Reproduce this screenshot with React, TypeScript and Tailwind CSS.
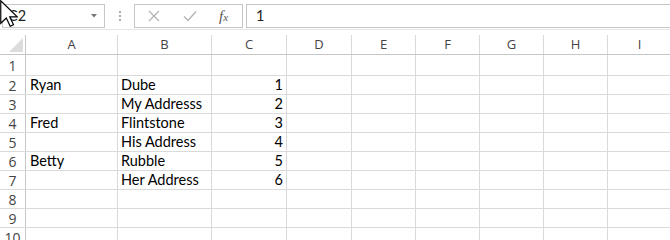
import React from 'react';

const cols = [
  { name: 'A', w: 'w-[92px]' },
  { name: 'B', w: 'w-[94px]' },
  { name: 'C', w: 'w-[75px]' },
  { name: 'D', w: 'w-[65px]' },
  { name: 'E', w: 'w-[64px]' },
  { name: 'F', w: 'w-[64px]' },
  { name: 'G', w: 'w-[64px]' },
  { name: 'H', w: 'w-[64px]' },
  { name: 'I', w: 'w-[64px]' },
];

const data: Record<number, [string, string, string]> = {
  2: ['Ryan', 'Dube', '1'],
  3: ['', 'My Addresss', '2'],
  4: ['Fred', 'Flintstone', '3'],
  5: ['', 'His Address', '4'],
  6: ['Betty', 'Rubble', '5'],
  7: ['', 'Her Address', '6'],
};

const rows = [1, 2, 3, 4, 5, 6, 7, 8, 9, 10];

const uiFont = "font-['Open_Sans','Noto_Sans',sans-serif]";
const cellFont = "font-['Lato','Liberation_Sans',sans-serif]";

export default function App() {
  return (
    <div className="relative w-[670px] h-[240px] overflow-hidden bg-white">
      {/* Formula bar */}
      <div className="flex items-start h-[30px] pt-[4px] border-b border-[#e6e6e6]">
        <div className="ml-[2px] w-[103px] h-[24px] border border-[#c6c6c6] flex items-center justify-between pl-[5px] pr-[7px]">
          <span className={`${cellFont} text-[14.5px] text-[#222]`}>C2</span>
          <svg width="6" height="4" viewBox="0 0 6 4">
            <path d="M0 0 H6 L3 3.5 Z" fill="#777" />
          </svg>
        </div>
        <div className="w-[29px] h-[24px] flex flex-col items-center justify-center gap-[2px]">
          <span className="w-[2px] h-[2px] bg-[#aaa]" />
          <span className="w-[2px] h-[2px] bg-[#aaa]" />
          <span className="w-[2px] h-[2px] bg-[#aaa]" />
        </div>
        <div className="w-[109px] h-[24px] border border-[#c6c6c6] flex items-center">
          <svg className="ml-[13px]" width="12" height="12" viewBox="0 0 12 12">
            <path d="M1 1 L11 11 M11 1 L1 11" stroke="#b4b4b4" strokeWidth="1.3" />
          </svg>
          <svg className="ml-[23px]" width="14" height="12" viewBox="0 0 14 12">
            <path d="M1 6.5 L5 10.5 L13 1.5" stroke="#b4b4b4" strokeWidth="1.4" fill="none" />
          </svg>
          <span className="ml-[22px] font-['Liberation_Serif',serif] italic text-[15px] text-[#555] leading-none">
            f<span className="text-[11px]">x</span>
          </span>
        </div>
        <div className="ml-[3px] flex-1 h-[24px] border border-r-0 border-[#c6c6c6] flex items-center pl-[9px]">
          <span className={`${cellFont} text-[14.5px] text-[#222]`}>1</span>
        </div>
      </div>

      {/* Grid */}
      <div className="mt-[5px]">
        <div className={`flex h-[20px] border-b border-[#c6c6c6] ${uiFont} text-[13px] text-[#444]`}>
          <div className="w-[26px] shrink-0 border-r border-[#c6c6c6] flex items-end justify-end pr-[2px] pb-[2px]">
            <svg width="14" height="14" viewBox="0 0 14 14">
              <path d="M14 0 V14 H0 Z" fill="#dcdcdc" />
            </svg>
          </div>
          {cols.map((c) => (
            <div
              key={c.name}
              className={`${c.w} shrink-0 border-r border-[#dadada] flex items-center justify-center`}
            >
              {c.name}
            </div>
          ))}
        </div>
        {rows.map((r) => {
          const d = data[r];
          return (
            <div
              key={r}
              className={`flex ${r === 1 ? 'h-[21px]' : 'h-[19px]'} border-b border-[#dadada]`}
            >
              <div
                className={`w-[26px] shrink-0 border-r border-[#c6c6c6] flex items-center justify-center ${uiFont} text-[14px] text-[#444]`}
              >
                {r}
              </div>
              {cols.map((c, i) => (
                <div
                  key={c.name}
                  className={`${c.w} shrink-0 border-r border-[#dadada] flex items-center ${
                    i === 2 ? 'justify-end pr-[3px]' : i === 0 ? 'pl-[4px]' : 'pl-[3px]'
                  } ${cellFont} text-[14.5px] text-black`}
                >
                  {d && i < 3 ? d[i] : ''}
                </div>
              ))}
            </div>
          );
        })}
      </div>

      {/* Mouse cursor */}
      <svg className="absolute left-0 top-0" width="18" height="27" viewBox="0 0 12 18">
        <path
          d="M0.5 0.5 V15.5 L4.2 12 L6.8 17.5 L9 16.5 L6.5 11.2 H11.5 Z"
          fill="white"
          stroke="black"
          strokeWidth="0.8"
          strokeLinejoin="miter"
        />
      </svg>
    </div>
  );
}
